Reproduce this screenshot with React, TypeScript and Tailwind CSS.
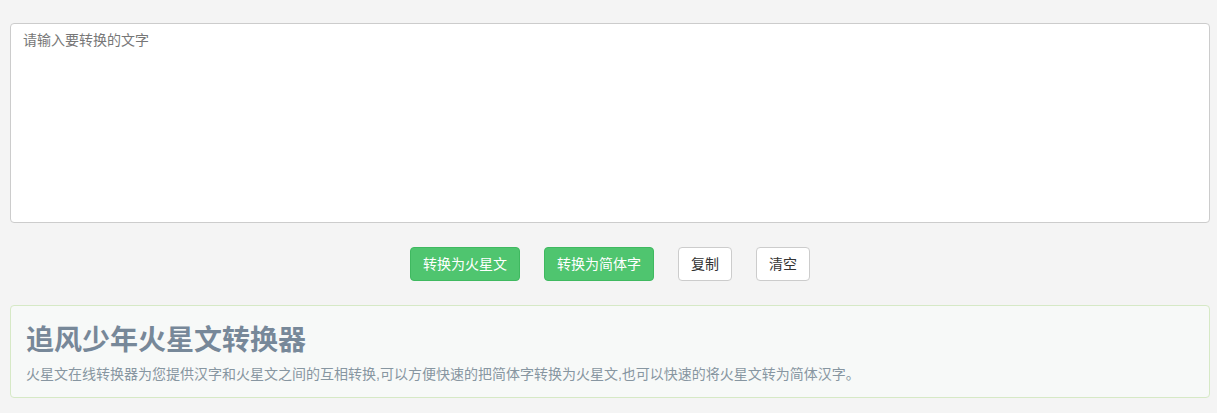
const App = () => {
  return (
    <div className="min-h-[413px] bg-[#f4f4f4] pl-[10px] pr-[7px] pt-[23px] pb-[15px] font-['Liberation_Sans','Noto_Sans_CJK_SC',sans-serif] text-[14px] text-[#333]">
      <textarea
        placeholder="请输入要转换的文字"
        className="block h-[200px] w-full resize-none rounded-[4px] border border-[#ccc] bg-white px-3 py-[6px] text-[14px] leading-[20px] text-[#555] placeholder:text-[#777] outline-none"
      />

      <div className="mt-6 flex justify-center gap-6">
        <button className="h-[34px] rounded-[4px] border border-[#3fb960] bg-[#4fc56f] px-3 text-[14px] text-white">
          转换为火星文
        </button>
        <button className="h-[34px] rounded-[4px] border border-[#3fb960] bg-[#4fc56f] px-3 text-[14px] text-white">
          转换为简体字
        </button>
        <button className="h-[34px] rounded-[4px] border border-[#ccc] bg-white px-3 text-[14px] text-[#333]">
          复制
        </button>
        <button className="h-[34px] rounded-[4px] border border-[#ccc] bg-white px-3 text-[14px] text-[#333]">
          清空
        </button>
      </div>

      <div className="mt-6 rounded-[4px] border border-[#d6e9c6] bg-[#f7f9f8] px-[15px] pt-[19px] pb-[13px]">
        <h1 className="text-[28px] font-bold leading-[31px] text-[#778899]">追风少年火星文转换器</h1>
        <p className="mt-2 text-[14px] leading-[20px] text-[#8796a1]">
          火星文在线转换器为您提供汉字和火星文之间的互相转换,可以方便快速的把简体字转换为火星文,也可以快速的将火星文转为简体汉字。
        </p>
      </div>
    </div>
  );
};

export default App;
